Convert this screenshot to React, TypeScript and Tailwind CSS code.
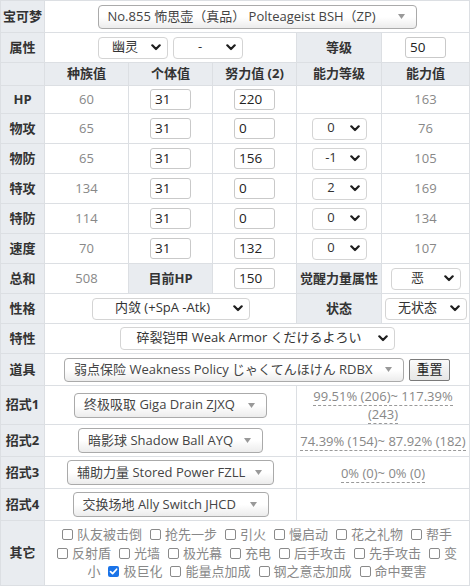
import React from "react";

const cell = "border border-[#dcdfe3] p-0 text-center align-middle";
const lab = cell + " bg-[#e9ecf0] font-bold text-[#333] text-[13px]";
const val = cell + " text-[#888] text-[13px]";

function Tri() {
  return (
    <svg width="7" height="5" viewBox="0 0 7 5" className="shrink-0">
      <polygon points="0,0 7,0 3.5,5" fill="#999" />
    </svg>
  );
}

function Chev() {
  return (
    <svg width="10" height="7" viewBox="0 0 10 7" className="shrink-0">
      <path d="M1.3 1.3 L5 5 L8.7 1.3" fill="none" stroke="#1e1e1e" strokeWidth="2.2" strokeLinecap="round" strokeLinejoin="round" />
    </svg>
  );
}

function Sel2({ cls, children }: { cls: string; children: React.ReactNode }) {
  return (
    <div className={"inline-flex items-center justify-between h-[24px] border border-[#aaa] rounded-[4px] bg-linear-to-b from-white from-50% to-[#ececec] pl-[9px] pr-[11px] text-[13px] text-[#444] whitespace-nowrap " + cls}>
      <span>{children}</span>
      <Tri />
    </div>
  );
}

function NSel({ cls, children }: { cls: string; children: React.ReactNode }) {
  return (
    <div className={"inline-flex items-center h-[22px] border border-[#d4d4d4] rounded-[4px] bg-white pr-[6px] text-[13px] text-[#333] whitespace-nowrap " + cls}>
      <span className="flex-1 text-center leading-none -mt-[3px]">{children}</span>
      <Chev />
    </div>
  );
}

function Inp({ v }: { v: string }) {
  return (
    <div className="inline-flex items-center h-[21px] w-[41px] border border-[#c9c9c9] rounded-[3px] bg-white pl-[4px] text-[13.5px] text-[#222] text-left">
      {v}
    </div>
  );
}

function CB({ checked, children }: { checked?: boolean; children?: React.ReactNode }) {
  return (
    <span className="inline-flex items-center">
      {checked ? (
        <span className="inline-flex items-center justify-center w-[11px] h-[11px] rounded-[2px] bg-[#1a73e8] mr-[4px]">
          <svg width="9" height="9" viewBox="0 0 9 9">
            <path d="M1.5 4.6 L3.6 6.6 L7.6 2.2" fill="none" stroke="#fff" strokeWidth="1.7" strokeLinecap="round" strokeLinejoin="round" />
          </svg>
        </span>
      ) : (
        <span className="inline-block w-[11px] h-[11px] rounded-[2px] border border-[#8a8a8a] bg-white mr-[4px]" />
      )}
      {children}
    </span>
  );
}

function Dmg({ children }: { children: React.ReactNode }) {
  return (
    <span className="text-[#888] text-[13px] leading-[17px] border-b border-dashed border-[#999]">{children}</span>
  );
}

const stats: [string, string, string, string, string][] = [
  ["物攻", "65", "0", "0", "76"],
  ["物防", "65", "156", "-1", "105"],
  ["特攻", "134", "0", "2", "169"],
  ["特防", "114", "0", "0", "134"],
  ["速度", "70", "132", "0", "107"],
];

export default function App() {
  return (
    <div className="w-[470px] h-[586px] bg-white font-['Open_Sans','Noto_Sans_CJK_SC',sans-serif] overflow-hidden">
      <table className="border-collapse table-fixed w-[469px]">
        <colgroup>
          <col className="w-[44px]" />
          <col className="w-[84px]" />
          <col className="w-[84px]" />
          <col className="w-[84px]" />
          <col className="w-[85px]" />
          <col className="w-[88px]" />
        </colgroup>
        <tbody>
          <tr className="h-[32px]">
            <td className={lab}>宝可梦</td>
            <td className={cell} colSpan={5}>
              <div className="flex justify-center">
                <Sel2 cls="w-[319px]">No.855 怖思壶（真品） Polteageist BSH（ZP)</Sel2>
              </div>
            </td>
          </tr>
          <tr className="h-[30px]">
            <td className={lab}>属性</td>
            <td className={cell} colSpan={3}>
              <div className="flex justify-center gap-[5px]">
                <NSel cls="w-[70px]">幽灵</NSel>
                <NSel cls="w-[70px]">-</NSel>
              </div>
            </td>
            <td className={lab}>等级</td>
            <td className={cell}>
              <div className="flex justify-center"><Inp v="50" /></div>
            </td>
          </tr>
          <tr className="h-[23px]">
            <td className={lab}></td>
            <td className={lab}>种族值</td>
            <td className={lab}>个体值</td>
            <td className={lab}>努力值 (2)</td>
            <td className={lab}>能力等级</td>
            <td className={lab}>能力值</td>
          </tr>
          <tr className="h-[28px]">
            <td className={lab}>HP</td>
            <td className={val}>60</td>
            <td className={cell}><div className="flex justify-center"><Inp v="31" /></div></td>
            <td className={cell}><div className="flex justify-center"><Inp v="220" /></div></td>
            <td className={cell}></td>
            <td className={val}>163</td>
          </tr>
          {stats.map(([n, b, e, s, v]) => (
            <tr key={n} className="h-[30px]">
              <td className={lab}>{n}</td>
              <td className={val}>{b}</td>
              <td className={cell}><div className="flex justify-center"><Inp v="31" /></div></td>
              <td className={cell}><div className="flex justify-center"><Inp v={e} /></div></td>
              <td className={cell}><div className="flex justify-center"><NSel cls="w-[55px]">{s}</NSel></div></td>
              <td className={val}>{v}</td>
            </tr>
          ))}
          <tr className="h-[30px]">
            <td className={lab}>总和</td>
            <td className={val}>508</td>
            <td className={lab}>目前HP</td>
            <td className={cell}><div className="flex justify-center"><Inp v="150" /></div></td>
            <td className={lab}>觉醒力量属性</td>
            <td className={cell}><div className="flex justify-center"><NSel cls="w-[70px]">恶</NSel></div></td>
          </tr>
          <tr className="h-[30px]">
            <td className={lab}>性格</td>
            <td className={cell} colSpan={3}>
              <div className="flex justify-center"><NSel cls="w-[158px]">内敛 (+SpA -Atk)</NSel></div>
            </td>
            <td className={lab}>状态</td>
            <td className={cell}><div className="flex justify-center"><NSel cls="w-[82px]">无状态</NSel></div></td>
          </tr>
          <tr className="h-[30px]">
            <td className={lab}>特性</td>
            <td className={cell} colSpan={5}>
              <div className="flex justify-center"><NSel cls="w-[275px] h-[23px]">碎裂铠甲 Weak Armor くだけるよろい</NSel></div>
            </td>
          </tr>
          <tr className="h-[32px]">
            <td className={lab}>道具</td>
            <td className={cell} colSpan={5}>
              <div className="flex justify-center items-center gap-[5px]">
                <Sel2 cls="w-[340px]">弱点保险 Weakness Policy じゃくてんほけん RDBX</Sel2>
                <div className="inline-flex items-center justify-center h-[22px] w-[41px] border border-[#7a7a7a] rounded-[2px] bg-linear-to-b from-[#fafafa] to-[#e6e6e6] text-[13px] text-[#222]">重置</div>
              </div>
            </td>
          </tr>
          <tr className="h-[39px]">
            <td className={lab}>招式1</td>
            <td className={cell} colSpan={3}>
              <div className="flex justify-center"><Sel2 cls="w-[193px] h-[25px]">终极吸取 Giga Drain ZJXQ</Sel2></div>
            </td>
            <td className={cell + " px-[4px]"} colSpan={2}>
              <div className="leading-[17px]">
                <Dmg>99.51% (206)~ 117.39%</Dmg>
                <br />
                <Dmg>(243)</Dmg>
              </div>
            </td>
          </tr>
          <tr className="h-[32px]">
            <td className={lab}>招式2</td>
            <td className={cell} colSpan={3}>
              <div className="flex justify-center"><Sel2 cls="w-[185px] h-[25px]">暗影球 Shadow Ball AYQ</Sel2></div>
            </td>
            <td className={cell} colSpan={2}>
              <div className="leading-[17px] whitespace-nowrap"><Dmg>74.39% (154)~ 87.92% (182)</Dmg></div>
            </td>
          </tr>
          <tr className="h-[32px]">
            <td className={lab}>招式3</td>
            <td className={cell} colSpan={3}>
              <div className="flex justify-center"><Sel2 cls="w-[207px] h-[25px]">辅助力量 Stored Power FZLL</Sel2></div>
            </td>
            <td className={cell} colSpan={2}>
              <div className="leading-[17px]"><Dmg>0% (0)~ 0% (0)</Dmg></div>
            </td>
          </tr>
          <tr className="h-[32px]">
            <td className={lab}>招式4</td>
            <td className={cell} colSpan={3}>
              <div className="flex justify-center"><Sel2 cls="w-[196px] h-[25px]">交换场地 Ally Switch JHCD</Sel2></div>
            </td>
            <td className={cell} colSpan={2}></td>
          </tr>
          <tr className="h-[65px]">
            <td className={lab}>其它</td>
            <td className={cell + " text-[13px] text-[#888] leading-[18.5px]"} colSpan={5}>
              <div className="flex flex-col items-center whitespace-nowrap">
                <div className="flex gap-[8px]">
                  <CB>队友被击倒</CB>
                  <CB>抢先一步</CB>
                  <CB>引火</CB>
                  <CB>慢启动</CB>
                  <CB>花之礼物</CB>
                  <CB>帮手</CB>
                </div>
                <div className="flex gap-[8px]">
                  <CB>反射盾</CB>
                  <CB>光墙</CB>
                  <CB>极光幕</CB>
                  <CB>充电</CB>
                  <CB>后手攻击</CB>
                  <CB>先手攻击</CB>
                  <CB>变</CB>
                </div>
                <div className="flex gap-[8px]">
                  <span>小</span>
                  <CB checked>极巨化</CB>
                  <CB>能量点加成</CB>
                  <CB>钢之意志加成</CB>
                  <CB>命中要害</CB>
                </div>
              </div>
            </td>
          </tr>
        </tbody>
      </table>
    </div>
  );
}
